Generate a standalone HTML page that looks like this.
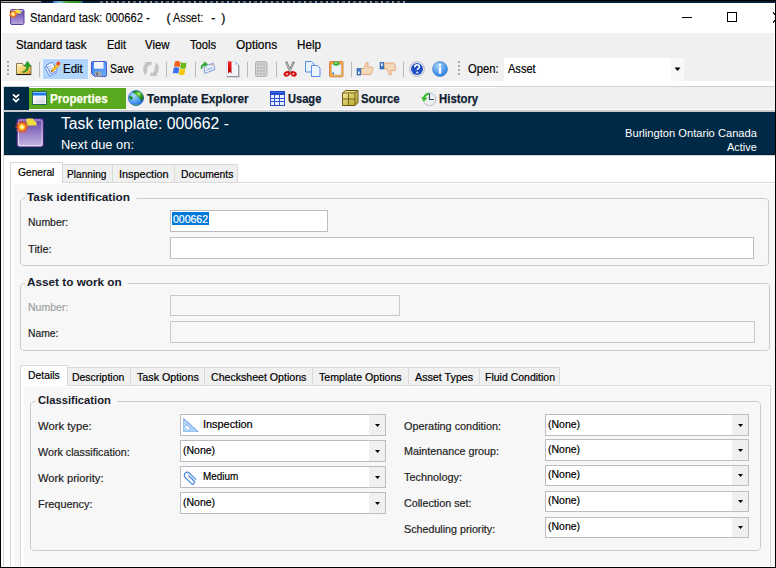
<!DOCTYPE html>
<html><head><meta charset="utf-8"><style>
html,body{margin:0;padding:0;width:776px;height:568px;overflow:hidden;background:#fff}
body{position:relative;font-family:"Liberation Sans",sans-serif;}
.t{position:absolute;white-space:nowrap;line-height:20px;-webkit-text-stroke-width:0.2px}
svg{position:absolute;overflow:visible}
</style></head><body>
<div style="position:absolute;left:0px;top:0px;width:776px;height:3px;background:#0a1a28"></div>
<div style="position:absolute;left:0px;top:0px;width:776px;height:568px;background:#fff"></div>
<div style="position:absolute;left:0px;top:0px;width:776px;height:1px;background:#000"></div>
<div style="position:absolute;left:0px;top:1px;width:41px;height:1px;background:#a8a8a8"></div>
<div style="position:absolute;left:0px;top:2px;width:41px;height:1px;background:#303030"></div>
<div style="position:absolute;left:41px;top:1px;width:735px;height:2px;background:#06203a"></div>
<div style="position:absolute;left:53px;top:1px;width:30px;height:2px;background:linear-gradient(90deg,#3070d0,#80b8f0 20%,#50a030 45%,#209020 90%,#2050c0)"></div>
<div style="position:absolute;left:100px;top:1px;width:305px;height:2px;background:repeating-linear-gradient(90deg,#5a6a78 0 3px,#06203a 3px 6px,#8a96a0 6px 8px,#06203a 8px 11px)"></div>
<svg style="left:10px;top:9px" width="16" height="17" viewBox="0 0 16 17"><defs><linearGradient id="tig" x1="0" y1="0" x2="0" y2="1"><stop offset="0" stop-color="#5a3aa6"/><stop offset="1" stop-color="#bba8de"/></linearGradient>
<radialGradient id="sun2"><stop offset="0" stop-color="#ffffff"/><stop offset="0.4" stop-color="#fff07a"/><stop offset="1" stop-color="#f87818"/></radialGradient></defs>
<rect x="0.5" y="0.5" width="13.5" height="15" rx="1.5" fill="url(#tig)" stroke="#5b42a2"/>
<rect x="1.5" y="1.2" width="11.5" height="1.2" fill="#fff" opacity="0.8"/>
<path d="M5 0.5h3.8l0.8 1.6c1 0 1.6 0.6 1.6 1.4v1h-6.2z" fill="#f0e040"/>
<g transform="translate(3.1,5.1)"><path d="M0.00 -4.60 L0.80 -2.47 L2.70 -3.72 L2.10 -1.53 L4.37 -1.42 L2.60 -0.00 L4.37 1.42 L2.10 1.53 L2.70 3.72 L0.80 2.47 L0.00 4.60 L-0.80 2.47 L-2.70 3.72 L-2.10 1.53 L-4.37 1.42 L-2.60 0.00 L-4.37 -1.42 L-2.10 -1.53 L-2.70 -3.72 L-0.80 -2.47z" fill="#f26a10"/><circle r="2.7" fill="url(#sun2)"/></g></svg>
<div class="t" style="left:30.20px;top:8.32px;font-size:12.35px;color:#000;transform:scaleX(0.9095);transform-origin:0 0;-webkit-text-stroke-width:0.1px">Standard task: 000662 -</div>
<div class="t" style="left:166.40px;top:8.32px;font-size:12.35px;color:#000;">(</div>
<div class="t" style="left:173.30px;top:8.32px;font-size:12.35px;color:#000;transform:scaleX(0.8799);transform-origin:0 0;-webkit-text-stroke-width:0.1px">Asset:</div>
<div class="t" style="left:211.20px;top:8.32px;font-size:12.35px;color:#000;">-</div>
<div class="t" style="left:221.20px;top:8.32px;font-size:12.35px;color:#000;">)</div>
<div style="position:absolute;left:682px;top:17px;width:10px;height:1px;background:#000"></div>
<div style="position:absolute;left:727px;top:12px;width:10px;height:10px;border:1px solid #000;box-sizing:border-box"></div>
<svg style="left:772px;top:11px" width="4" height="13" viewBox="0 0 4 13"><path d="M1 1.5l3 3M1 11.5l3-3" stroke="#000" stroke-width="1.2"/></svg>
<div style="position:absolute;left:2px;top:33px;width:772px;height:48px;background:#f0f0f0"></div>
<div class="t" style="left:16.20px;top:34.67px;font-size:12.5px;color:#000;transform:scaleX(0.9138);transform-origin:0 0;">Standard task</div>
<div class="t" style="left:106.50px;top:34.67px;font-size:12.5px;color:#000;transform:scaleX(0.8822);transform-origin:0 0;">Edit</div>
<div class="t" style="left:145.40px;top:34.67px;font-size:12.5px;color:#000;transform:scaleX(0.9108);transform-origin:0 0;">View</div>
<div class="t" style="left:189.70px;top:34.67px;font-size:12.5px;color:#000;transform:scaleX(0.8980);transform-origin:0 0;">Tools</div>
<div class="t" style="left:235.50px;top:34.67px;font-size:12.5px;color:#000;transform:scaleX(0.9541);transform-origin:0 0;">Options</div>
<div class="t" style="left:296.70px;top:34.67px;font-size:12.5px;color:#000;transform:scaleX(0.9334);transform-origin:0 0;">Help</div>
<div style="position:absolute;left:7px;top:61px;width:2px;height:2px;background:#a8a8a8"></div>
<div style="position:absolute;left:7px;top:65px;width:2px;height:2px;background:#a8a8a8"></div>
<div style="position:absolute;left:7px;top:69px;width:2px;height:2px;background:#a8a8a8"></div>
<div style="position:absolute;left:7px;top:73px;width:2px;height:2px;background:#a8a8a8"></div>
<div style="position:absolute;left:458px;top:61px;width:2px;height:2px;background:#a8a8a8"></div>
<div style="position:absolute;left:458px;top:65px;width:2px;height:2px;background:#a8a8a8"></div>
<div style="position:absolute;left:458px;top:69px;width:2px;height:2px;background:#a8a8a8"></div>
<div style="position:absolute;left:458px;top:73px;width:2px;height:2px;background:#a8a8a8"></div>
<div style="position:absolute;left:39px;top:62px;width:1px;height:15px;background:#b8b8b8"></div>
<div style="position:absolute;left:166px;top:62px;width:1px;height:15px;background:#b8b8b8"></div>
<div style="position:absolute;left:195px;top:62px;width:1px;height:15px;background:#b8b8b8"></div>
<div style="position:absolute;left:247px;top:62px;width:1px;height:15px;background:#b8b8b8"></div>
<div style="position:absolute;left:276px;top:62px;width:1px;height:15px;background:#b8b8b8"></div>
<div style="position:absolute;left:351px;top:62px;width:1px;height:15px;background:#b8b8b8"></div>
<div style="position:absolute;left:403px;top:62px;width:1px;height:15px;background:#b8b8b8"></div>
<div style="position:absolute;left:42px;top:58px;width:47px;height:22px;background:#b1d5fb;border:1px solid #f4f9ff;box-sizing:border-box"></div>
<svg style="left:16px;top:60px" width="16" height="16" viewBox="0 0 16 16"><defs><linearGradient id="fg" x1="0" y1="0" x2="1" y2="1"><stop offset="0" stop-color="#fcf0b8"/><stop offset="0.55" stop-color="#f2cc68"/><stop offset="1" stop-color="#e39a2a"/></linearGradient></defs>
<path d="M0.5 3.5h6l1 2h7.5v9h-14.5z" fill="url(#fg)" stroke="#7a6a4a" stroke-width="0.9"/>
<rect x="1.2" y="4.2" width="5" height="1.6" fill="#fff4c8"/>
<path d="M0.5 14.5h14.5" stroke="#1a1a1a" stroke-width="1.1"/>
<path d="M6.5 11.8c2.5-0.6 4.2-2.5 4.4-5.6h-2.6l3.2-5 3.4 5h-2.2c-0.2 4-2.6 6.2-6.2 6.2z" fill="#22a822" stroke="#0e6e10" stroke-width="0.5"/></svg>
<svg style="left:44px;top:61px" width="16" height="16" viewBox="0 0 16 16"><path d="M0.8 6.5l6.5-3.2 5.2 8.6-6.8 3.4z" fill="#dfe8fb" stroke="#6a8ee6" stroke-width="0.9"/>
<path d="M2.2 4.2l6.2-3 5 8.5-6.5 3.2z" fill="#f6f9ff" stroke="#5a7ee0" stroke-width="0.9"/>
<path d="M3.6 6.4l3.6-1.7M4.6 8.2l3.6-1.7M5.6 10l3.6-1.7" stroke="#90b0ee" stroke-width="0.9"/>
<path d="M7.2 10.8l0.8-2.4 5.6-6.2 1.9 1.7-5.6 6.2z" fill="#f8c418" stroke="#b87a10" stroke-width="0.5"/>
<circle cx="14.3" cy="2.4" r="1.9" fill="#ec4a34"/>
<path d="M7.2 10.8l0.5-1.5 1 0.9z" fill="#222"/></svg>
<svg style="left:91px;top:61px" width="16" height="16" viewBox="0 0 16 16"><defs><linearGradient id="svg1" x1="0" y1="0" x2="1" y2="1"><stop offset="0" stop-color="#3a7ee8"/><stop offset="1" stop-color="#6ab0ff"/></linearGradient></defs>
<path d="M0.5 1.5a1 1 0 0 1 1-1h13a1 1 0 0 1 1 1v13a1 1 0 0 1-1 1h-11l-3-3z" fill="url(#svg1)" stroke="#5656c4"/>
<path d="M3 1h9.5v6.5h-9.5z" fill="#f4f6fe"/><path d="M3 7.5h9.5" stroke="#c8d4f4" stroke-width="0.8"/>
<rect x="4" y="10.5" width="6.5" height="5" fill="#a6a6ae"/><rect x="5.5" y="11.5" width="1.3" height="3" fill="#505058"/></svg>
<svg style="left:143px;top:61px" width="16" height="16" viewBox="0 0 16 16"><path d="M1.5 1h7.5l-1.2 4-1.4-1.2c-1.8 1.6-2.6 3.8-2.2 6.4l-1.6 4.3c-1.8-2-2.6-4.5-2.3-7.3 0.3-2.2 1.2-3.8 2.6-4.9z" fill="#c2c2c2"/><path d="M1.5 1h7.5l-1.2 4-1.4-1.2c-1.8 1.6-2.6 3.8-2.2 6.4l-1.6 4.3c-1.8-2-2.6-4.5-2.3-7.3 0.3-2.2 1.2-3.8 2.6-4.9z" fill="#c2c2c2" transform="rotate(180 8 8)"/></svg>
<svg style="left:172px;top:60px" width="16" height="16" viewBox="0 0 16 16"><path d="M3 1.5c2-0.8 3.5-0.6 5.5 0.2l-1 5.6c-2-0.8-3.5-1-5.6-0.2z" fill="#f06018"/>
<path d="M9 2.2c2 0.8 3.5 1 5.6 0.2l-1 5.8c-2 0.8-3.5 0.6-5.6-0.2z" fill="#68b818"/>
<path d="M1.8 7.8c2-0.8 3.5-0.6 5.5 0.2l-1 5.6c-2-0.8-3.5-1-5.6-0.2z" fill="#3a6ef0"/>
<path d="M7.8 8.6c2 0.8 3.5 1 5.6 0.2l-1 5.8c-2 0.8-3.5 0.6-5.6-0.2z" fill="#f8c810"/></svg>
<svg style="left:200px;top:61px" width="16" height="16" viewBox="0 0 16 16"><path d="M4 5.1L13.5 2.3 14.9 8.6 4.7 12.5z" fill="#eaf1fd" stroke="#7894d6" stroke-width="0.9"/>
<path d="M4.3 5.3L9.6 8.2 13.4 2.6" fill="none" stroke="#b4c8ee" stroke-width="0.8"/>
<path d="M6 9.5l6.5-2.4" stroke="#a8c0ec" stroke-width="1.2"/>
<rect x="11" y="3.2" width="1.8" height="1" fill="#e8a040"/>
<path d="M1.2 7.8c-0.8-2.6 0.8-5 3.4-5.6l-0.4-1.6 3.4 2.6-3 2.4-0.3-1.5c-1.6 0.4-2.4 2-2 3.4z" fill="#2cb02c" stroke="#1a8a1a" stroke-width="0.4"/></svg>
<svg style="left:224px;top:61px" width="16" height="17" viewBox="0 0 16 17"><defs><linearGradient id="rib" x1="0" y1="0" x2="0" y2="1"><stop offset="0" stop-color="#ff2020"/><stop offset="1" stop-color="#b00000"/></linearGradient></defs>
<path d="M2.5 0.5h9l3 3v12h-12z" fill="#f0f3f8" stroke="#d0d4e0" stroke-width="0.8"/>
<path d="M11.5 0.5v3h3z" fill="#a0c4ec"/>
<path d="M14.8 4v11.8h-12" stroke="#606060" stroke-width="1.1" fill="none" opacity="0.7"/>
<path d="M4 0.5h3.5v12l-1.75-1.8-1.75 1.8z" fill="url(#rib)"/></svg>
<svg style="left:254px;top:61px" width="16" height="16" viewBox="0 0 16 16"><rect x="1.5" y="0.5" width="11.5" height="15" rx="2" fill="#d4d4d4" stroke="#b0b0b0"/><rect x="3" y="2" width="8.5" height="2.5" fill="#c0c0c0"/><rect x="3.2" y="6" width="1.6" height="1.6" fill="#a8a8a8"/><rect x="6.2" y="6" width="1.6" height="1.6" fill="#a8a8a8"/><rect x="9.2" y="6" width="1.6" height="1.6" fill="#a8a8a8"/><rect x="3.2" y="9" width="1.6" height="1.6" fill="#a8a8a8"/><rect x="6.2" y="9" width="1.6" height="1.6" fill="#a8a8a8"/><rect x="9.2" y="9" width="1.6" height="1.6" fill="#a8a8a8"/><rect x="3.2" y="12" width="1.6" height="1.6" fill="#a8a8a8"/><rect x="6.2" y="12" width="1.6" height="1.6" fill="#a8a8a8"/><rect x="9.2" y="12" width="1.6" height="1.6" fill="#a8a8a8"/></svg>
<svg style="left:282px;top:61px" width="16" height="16" viewBox="0 0 16 16"><path d="M4.5 1.5l4 9.5M11.5 1.5l-4.5 9.5" stroke="#7a7a7a" stroke-width="2.2" stroke-linecap="round"/>
<path d="M4.5 1.8l3.8 8.8M11.5 1.8l-4.2 8.8" stroke="#d8d8d8" stroke-width="0.7"/>
<ellipse cx="4.8" cy="12.8" rx="3.3" ry="2.6" transform="rotate(-25 4.8 12.8)" fill="#d81010"/>
<ellipse cx="11.6" cy="12.8" rx="3.3" ry="2.6" transform="rotate(25 11.6 12.8)" fill="#d81010"/>
<circle cx="5" cy="13" r="1" fill="#f0c0c0"/><circle cx="11.4" cy="13" r="1" fill="#f0c0c0"/></svg>
<svg style="left:305px;top:61px" width="16" height="16" viewBox="0 0 16 16"><path d="M0.5 0.5h6l2.5 2.5v8h-8.5z" fill="#e8f0fc" stroke="#5a8ee0"/>
<path d="M6.5 4.5h6l2.5 2.5v8.5h-8.5z" fill="#eef4fc" stroke="#5a8ee0"/></svg>
<svg style="left:329px;top:61px" width="16" height="16" viewBox="0 0 16 16"><defs><linearGradient id="pst" x1="0" y1="0" x2="1" y2="1"><stop offset="0" stop-color="#f89a20"/><stop offset="1" stop-color="#f8c040"/></linearGradient></defs>
<rect x="0.5" y="0.5" width="13.5" height="15.3" rx="1" fill="url(#pst)" stroke="#d07858" stroke-width="0.9"/>
<path d="M2.6 3.2h9.4v10.6h-7.2l-2.2-2.2z" fill="#eef4ff" stroke="#a8bce0" stroke-width="0.5"/>
<path d="M2.6 11.4l2.4 2.4v-2.4z" fill="#2a6ae0"/>
<ellipse cx="7.3" cy="2.6" rx="3.2" ry="2.2" fill="#30b030"/><ellipse cx="7" cy="2" rx="1.8" ry="0.9" fill="#90e070"/></svg>
<svg style="left:356px;top:61px" width="18" height="16" viewBox="0 0 18 16"><path d="M5 7.5h3l2-5c0-1.5 2.5-1.5 2.2 0.5l-0.6 3h4c1.2 0 1.5 1.5 0.6 2 0.8 0.5 0.6 1.8-0.2 2 0.6 0.6 0.3 1.7-0.5 1.8 0.3 0.8-0.2 1.7-1 1.7h-7.5l-2-0.8z" fill="#f4d8bc" stroke="#e0a070" stroke-width="0.9"/>
<rect x="1" y="7.5" width="3.8" height="6.5" fill="#3a7ad0" stroke="#2a5a9a" stroke-width="0.6"/><rect x="2" y="10.5" width="1.6" height="2.5" fill="#fff"/></svg>
<svg style="left:379px;top:61px" width="18" height="16" viewBox="0 0 18 16"><path d="M5 8h3l2 5c0 1.5 2.5 1.5 2.2-0.5l-0.6-3h4c1.2 0 1.5-1.5 0.6-2 0.8-0.5 0.6-1.8-0.2-2 0.6-0.6 0.3-1.7-0.5-1.8 0.3-0.8-0.2-1.7-1-1.7h-7.5l-2 0.8z" fill="#f4d8bc" stroke="#e0a070" stroke-width="0.9"/>
<rect x="1" y="1.5" width="3.8" height="6.5" fill="#3a7ad0" stroke="#2a5a9a" stroke-width="0.6"/><rect x="2" y="2.5" width="1.6" height="2.5" fill="#fff"/></svg>
<svg style="left:409px;top:61px" width="16" height="16" viewBox="0 0 16 16"><circle cx="8" cy="8" r="7.3" fill="#fff" stroke="#9aa0b0" stroke-width="0.8"/>
<circle cx="8" cy="8" r="6" fill="#2050c0"/>
<path d="M5.8 6.2c0-1.5 1-2.4 2.3-2.4 1.4 0 2.3 0.9 2.3 2 0 1.6-2 1.8-2 3.3" fill="none" stroke="#fff" stroke-width="1.6"/>
<circle cx="8.3" cy="11.6" r="1" fill="#fff"/></svg>
<svg style="left:432px;top:61px" width="16" height="16" viewBox="0 0 16 16"><defs><radialGradient id="ig" cx="0.4" cy="0.3" r="0.8"><stop offset="0" stop-color="#a8d8ff"/><stop offset="1" stop-color="#1a70d8"/></radialGradient></defs>
<circle cx="8" cy="8" r="7.5" fill="url(#ig)" stroke="#3a80d0" stroke-width="0.6"/>
<circle cx="8" cy="4" r="1.2" fill="#fff"/><rect x="6.9" y="6.2" width="2.2" height="6.5" fill="#fff"/></svg>
<div class="t" style="left:63.30px;top:58.87px;font-size:12.5px;color:#000;transform:scaleX(0.9147);transform-origin:0 0;">Edit</div>
<div class="t" style="left:110.00px;top:58.87px;font-size:12.5px;color:#000;transform:scaleX(0.8319);transform-origin:0 0;">Save</div>
<div class="t" style="left:467.70px;top:58.87px;font-size:12.5px;color:#000;transform:scaleX(0.8957);transform-origin:0 0;">Open:</div>
<div style="position:absolute;left:504px;top:58px;width:180px;height:23px;background:#fff"></div>
<div style="position:absolute;left:671px;top:58px;width:13px;height:23px;background:#f8f8f8"></div>
<svg style="left:674px;top:67px" width="7" height="5" viewBox="0 0 7 5"><path d="M0.5 0.5h6l-3 3.5z" fill="#000"/></svg>
<div class="t" style="left:508.20px;top:59.07px;font-size:12.5px;color:#000;transform:scaleX(0.8828);transform-origin:0 0;">Asset</div>
<div style="position:absolute;left:2px;top:81px;width:772px;height:5px;background:#fff"></div>
<div style="position:absolute;left:4px;top:86px;width:771px;height:1px;background:#cdd0d4"></div>
<div style="position:absolute;left:4px;top:87px;width:771px;height:22px;background:#f0f0f0"></div>
<div style="position:absolute;left:4px;top:109px;width:771px;height:1px;background:#fff"></div>
<div style="position:absolute;left:29px;top:87px;width:468px;height:1px;background:#fff"></div>
<div style="position:absolute;left:4px;top:110px;width:771px;height:2px;background:#c8ccd0"></div>
<div style="position:absolute;left:4px;top:87px;width:25px;height:23px;background:#002946"></div>
<div style="position:absolute;left:29px;top:88px;width:97px;height:21px;background:#59a91e"></div>
<svg style="left:11px;top:92px" width="10" height="12" viewBox="0 0 10 12"><path d="M2 2.3l3 2.9 3-2.9M2 6.6l3 2.9 3-2.9" stroke="#fff" stroke-width="1.7" fill="none"/></svg>
<svg style="left:32px;top:91px" width="16" height="16" viewBox="0 0 16 16"><defs><linearGradient id="pg" x1="0" y1="0" x2="1" y2="1"><stop offset="0" stop-color="#fafafa"/><stop offset="1" stop-color="#d0d0e0"/></linearGradient></defs>
<rect x="0.5" y="0.5" width="14" height="13" fill="#fff" stroke="#2a6a50"/>
<rect x="1" y="1" width="13" height="3.5" fill="#1a78f0"/><rect x="1" y="1" width="13" height="1" fill="#8ac0ff"/>
<rect x="2" y="5" width="11" height="7.5" fill="url(#pg)"/></svg>
<svg style="left:128px;top:90px" width="17" height="17" viewBox="0 0 17 17"><defs><radialGradient id="gg" cx="0.35" cy="0.35" r="0.75"><stop offset="0" stop-color="#a8dcff"/><stop offset="0.6" stop-color="#4a98f0"/><stop offset="1" stop-color="#1a5ad8"/></radialGradient>
<radialGradient id="gl" cx="0.55" cy="0.3" r="0.6"><stop offset="0" stop-color="#b8f080"/><stop offset="0.5" stop-color="#30a020"/><stop offset="1" stop-color="#107010"/></radialGradient></defs>
<circle cx="8" cy="8" r="7.6" fill="url(#gg)" stroke="#3a68d8" stroke-width="0.8"/>
<path d="M4.5 1.8c2.5-1.4 6-1.3 8.5 0.8 1.8 1.6 2.6 3.8 2.5 6-0.6 0.8-1.4 2-2.4 2.8l-0.4-2.2c-0.8-0.4-1.8-1-2-2.4-1.2 0.1-2-0.5-2.6-1.4 0.4-0.9-0.2-1.6-1.2-1.9-1 0.2-1.8-0.2-2.4-1.7z" fill="url(#gl)"/>
<path d="M0.8 6.5c1.2-0.6 2.6-0.4 3.6 0.6 0.6 1 0 2.1-0.8 2.8-1.2-0.2-2.3-1.5-2.8-3.4z" fill="#188a18"/>
<path d="M5 14.6c2 0.6 4 0.6 6 0" stroke="#40b040" stroke-width="0.9" fill="none"/></svg>
<svg style="left:270px;top:91px" width="16" height="16" viewBox="0 0 16 16"><rect x="0.5" y="0.5" width="14" height="14" fill="#e4f0ff" stroke="#3450c8"/><rect x="0" y="0" width="15" height="3.5" fill="#1840c8"/><rect x="1" y="1" width="13" height="1" fill="#3a78f0"/><path d="M4.5 0v15" stroke="#3450c8"/><path d="M9.5 0v15" stroke="#3450c8"/><path d="M0 3.5h15" stroke="#3450c8"/><path d="M0 7.5h15" stroke="#3450c8"/><path d="M0 10.5h15" stroke="#3450c8"/></svg>
<svg style="left:342px;top:90px" width="17" height="17" viewBox="0 0 17 17"><defs><linearGradient id="sg" x1="0" y1="0" x2="1" y2="1"><stop offset="0" stop-color="#f8f0a0"/><stop offset="1" stop-color="#b8a020"/></linearGradient></defs>
<path d="M0.5 3l3-2.5h12.5v12l-3 3h-12.5z" fill="url(#sg)" stroke="#6a5a18"/>
<path d="M0.5 3h12.5v12.5M13 3l3-2.5M6.5 3.5v12M0.8 9h12" stroke="#6a5a18" fill="none" stroke-width="0.9"/></svg>
<svg style="left:420px;top:91px" width="16" height="16" viewBox="0 0 16 16"><circle cx="9.5" cy="8.3" r="6.3" fill="#eef0f2" stroke="#b8bcc4"/>
<path d="M9.5 2.5v6h4.5" stroke="#3a4a60" stroke-width="1.1" fill="none"/>
<path d="M9 1.8c-3 0-5 1.8-6 4.5l-2 -0.3 2.8 4.8 3.8-3.8-2.1-0.3c0.6-1.5 1.8-2.6 3.5-2.9z" fill="#38c030"/></svg>
<div class="t" style="left:50.30px;top:89.42px;font-size:12.94px;color:#fffff0;font-weight:bold;-webkit-text-stroke-width:0;transform:scaleX(0.9015);transform-origin:0 0;-webkit-text-stroke-width:0.25px">Properties</div>
<div class="t" style="left:147.00px;top:89.42px;font-size:12.94px;color:#0e1d33;font-weight:bold;-webkit-text-stroke-width:0;transform:scaleX(0.9076);transform-origin:0 0;-webkit-text-stroke-width:0.25px">Template Explorer</div>
<div class="t" style="left:288.30px;top:89.42px;font-size:12.94px;color:#0e1d33;font-weight:bold;-webkit-text-stroke-width:0;transform:scaleX(0.8575);transform-origin:0 0;-webkit-text-stroke-width:0.25px">Usage</div>
<div class="t" style="left:361.20px;top:89.42px;font-size:12.94px;color:#0e1d33;font-weight:bold;-webkit-text-stroke-width:0;transform:scaleX(0.8822);transform-origin:0 0;-webkit-text-stroke-width:0.25px">Source</div>
<div class="t" style="left:439.30px;top:89.42px;font-size:12.94px;color:#0e1d33;font-weight:bold;-webkit-text-stroke-width:0;transform:scaleX(0.8794);transform-origin:0 0;-webkit-text-stroke-width:0.25px">History</div>
<div style="position:absolute;left:4px;top:112px;width:771px;height:42px;background:#002946"></div>
<div style="position:absolute;left:4px;top:154px;width:771px;height:1px;background:#001a30"></div>
<div style="position:absolute;left:4px;top:155px;width:771px;height:1px;background:#d4d8dc"></div>
<svg style="left:13px;top:117px" width="34" height="34" viewBox="0 0 34 34"><defs><linearGradient id="hig" x1="0" y1="0" x2="0" y2="1"><stop offset="0" stop-color="#6242a8"/><stop offset="1" stop-color="#c8b8e6"/></linearGradient>
<radialGradient id="sun1"><stop offset="0" stop-color="#ffffff"/><stop offset="0.35" stop-color="#fff27a"/><stop offset="0.7" stop-color="#ffa020"/><stop offset="1" stop-color="#f05010"/></radialGradient></defs>
<rect x="4" y="1.5" width="26.5" height="28.5" rx="2.5" fill="url(#hig)" stroke="#3c2278" stroke-width="1.2"/>
<rect x="5.5" y="3" width="23.5" height="25.5" rx="1.5" fill="none" stroke="#fff" stroke-opacity="0.6"/>
<path d="M13.5 1.5h6.5l1.2 2.5c1.5 0 2.3 0.8 2.3 2v2.5h-10z" fill="#f0dc3c"/>
<g transform="translate(9,10)"><path d="M0.00 -7.60 L1.04 -3.86 L3.80 -6.58 L2.83 -2.83 L6.58 -3.80 L3.86 -1.04 L7.60 -0.00 L3.86 1.04 L6.58 3.80 L2.83 2.83 L3.80 6.58 L1.04 3.86 L0.00 7.60 L-1.04 3.86 L-3.80 6.58 L-2.83 2.83 L-6.58 3.80 L-3.86 1.04 L-7.60 0.00 L-3.86 -1.04 L-6.58 -3.80 L-2.83 -2.83 L-3.80 -6.58 L-1.04 -3.86z" fill="#f25a12"/><circle r="4.3" fill="url(#sun1)"/></g></svg>
<div class="t" style="left:61.00px;top:113.58px;font-size:15.63px;color:#fff;transform:scaleX(1.0071);transform-origin:0 0;-webkit-text-stroke-width:0">Task template: 000662 -</div>
<div class="t" style="left:61.00px;top:135.47px;font-size:12.79px;color:#fff;transform:scaleX(1.0066);transform-origin:0 0;-webkit-text-stroke-width:0">Next due on:</div>
<div class="t" style="left:625.30px;top:122.87px;font-size:11.63px;color:#fff;transform:scaleX(0.9584);transform-origin:0 0;-webkit-text-stroke-width:0">Burlington Ontario Canada</div>
<div class="t" style="left:727.40px;top:136.97px;font-size:11.63px;color:#fff;transform:scaleX(0.9442);transform-origin:0 0;-webkit-text-stroke-width:0">Active</div>
<div style="position:absolute;left:10px;top:182px;width:766px;height:386px;background:#fff;border-left:1px solid #d9d9d9;border-top:1px solid #d9d9d9;box-sizing:border-box"></div>
<div style="position:absolute;left:14px;top:184px;width:761px;height:383px;background:#f7f7f7"></div>
<div style="position:absolute;left:62px;top:164px;width:51px;height:18px;background:#f0f0f0;border:1px solid #d9d9d9;border-bottom:none;box-sizing:border-box"></div>
<div class="t" style="left:66.80px;top:164.02px;font-size:11.19px;color:#000;transform:scaleX(0.9047);transform-origin:0 0;">Planning</div>
<div style="position:absolute;left:112px;top:164px;width:63px;height:18px;background:#f0f0f0;border:1px solid #d9d9d9;border-bottom:none;box-sizing:border-box"></div>
<div class="t" style="left:118.50px;top:164.02px;font-size:11.19px;color:#000;transform:scaleX(0.9742);transform-origin:0 0;">Inspection</div>
<div style="position:absolute;left:174px;top:164px;width:64px;height:18px;background:#f0f0f0;border:1px solid #d9d9d9;border-bottom:none;box-sizing:border-box"></div>
<div class="t" style="left:180.80px;top:164.02px;font-size:11.19px;color:#000;transform:scaleX(0.9258);transform-origin:0 0;">Documents</div>
<div style="position:absolute;left:10px;top:162px;width:53px;height:21px;background:#fff;border:1px solid #d9d9d9;border-bottom:none;box-sizing:border-box"></div>
<div class="t" style="left:17.80px;top:162.02px;font-size:11.19px;color:#000;transform:scaleX(0.9143);transform-origin:0 0;">General</div>
<svg style="left:20px;top:198px" width="749" height="68" viewBox="0 0 749 68"><path d="M116.5 0.5H746L748.5 3V65L746 67.5H3L0.5 65V3L3 0.5H5.199999999999999" fill="none" stroke="#c6cbd3" stroke-width="1"/></svg>
<div class="t" style="left:27.20px;top:186.97px;font-size:11.34px;color:#16202c;font-weight:bold;-webkit-text-stroke-width:0;transform:scaleX(1.0444);transform-origin:0 0;">Task identification</div>
<div class="t" style="left:28.40px;top:211.82px;font-size:11.48px;color:#1e1e1e;transform:scaleX(0.9131);transform-origin:0 0;">Number:</div>
<div class="t" style="left:28.40px;top:238.62px;font-size:11.48px;color:#1e1e1e;transform:scaleX(0.9692);transform-origin:0 0;">Title:</div>
<div style="position:absolute;left:170px;top:210px;width:158px;height:22px;background:#fff;border:1px solid #bcbcc2;box-sizing:border-box"></div>
<div style="position:absolute;left:172px;top:212px;width:37px;height:13px;background:#0078d7"></div>
<div class="t" style="left:172.50px;top:209.32px;font-size:11.19px;color:#fff;transform:scaleX(0.9373);transform-origin:0 0;">000662</div>
<div style="position:absolute;left:170px;top:237px;width:584px;height:22px;background:#fff;border:1px solid #bcbcc2;box-sizing:border-box"></div>
<svg style="left:20px;top:283px" width="750" height="68" viewBox="0 0 750 68"><path d="M107.5 0.5H747L749.5 3V65L747 67.5H3L0.5 65V3L3 0.5H5.199999999999999" fill="none" stroke="#c6cbd3" stroke-width="1"/></svg>
<div class="t" style="left:27.20px;top:271.97px;font-size:11.34px;color:#16202c;font-weight:bold;-webkit-text-stroke-width:0;transform:scaleX(1.0376);transform-origin:0 0;">Asset to work on</div>
<div class="t" style="left:28.40px;top:296.82px;font-size:11.48px;color:#a0a0a0;transform:scaleX(0.9176);transform-origin:0 0;">Number:</div>
<div class="t" style="left:28.40px;top:322.82px;font-size:11.48px;color:#1e1e1e;transform:scaleX(0.9021);transform-origin:0 0;">Name:</div>
<div style="position:absolute;left:170px;top:295px;width:230px;height:21px;background:#f7f7f7;border:1px solid #c8c8cc;box-sizing:border-box"></div>
<div style="position:absolute;left:170px;top:321px;width:585px;height:22px;background:#f7f7f7;border:1px solid #c8c8cc;box-sizing:border-box"></div>
<div style="position:absolute;left:20px;top:385px;width:751px;height:182px;background:#fff;border-left:1px solid #d9d9d9;border-top:1px solid #d9d9d9;border-right:1px solid #d9d9d9;box-sizing:border-box"></div>
<div style="position:absolute;left:24px;top:387px;width:745px;height:179px;background:#f7f7f7"></div>
<div style="position:absolute;left:67px;top:367px;width:64px;height:18px;background:#f0f0f0;border:1px solid #d9d9d9;border-bottom:none;box-sizing:border-box"></div>
<div class="t" style="left:71.60px;top:367.12px;font-size:11.19px;color:#000;transform:scaleX(0.9344);transform-origin:0 0;">Description</div>
<div style="position:absolute;left:130px;top:367px;width:75px;height:18px;background:#f0f0f0;border:1px solid #d9d9d9;border-bottom:none;box-sizing:border-box"></div>
<div class="t" style="left:136.60px;top:367.12px;font-size:11.19px;color:#000;transform:scaleX(0.9570);transform-origin:0 0;">Task Options</div>
<div style="position:absolute;left:204px;top:367px;width:109px;height:18px;background:#f0f0f0;border:1px solid #d9d9d9;border-bottom:none;box-sizing:border-box"></div>
<div class="t" style="left:210.80px;top:367.12px;font-size:11.19px;color:#000;transform:scaleX(0.9467);transform-origin:0 0;">Checksheet Options</div>
<div style="position:absolute;left:312px;top:367px;width:97px;height:18px;background:#f0f0f0;border:1px solid #d9d9d9;border-bottom:none;box-sizing:border-box"></div>
<div class="t" style="left:319.40px;top:367.12px;font-size:11.19px;color:#000;transform:scaleX(0.9497);transform-origin:0 0;">Template Options</div>
<div style="position:absolute;left:408px;top:367px;width:72px;height:18px;background:#f0f0f0;border:1px solid #d9d9d9;border-bottom:none;box-sizing:border-box"></div>
<div class="t" style="left:414.90px;top:367.12px;font-size:11.19px;color:#000;transform:scaleX(0.9580);transform-origin:0 0;">Asset Types</div>
<div style="position:absolute;left:479px;top:367px;width:81px;height:18px;background:#f0f0f0;border:1px solid #d9d9d9;border-bottom:none;box-sizing:border-box"></div>
<div class="t" style="left:485.20px;top:367.12px;font-size:11.19px;color:#000;transform:scaleX(0.9379);transform-origin:0 0;">Fluid Condition</div>
<div style="position:absolute;left:20px;top:365px;width:48px;height:21px;background:#fff;border:1px solid #d9d9d9;border-bottom:none;box-sizing:border-box"></div>
<div class="t" style="left:27.80px;top:364.92px;font-size:11.19px;color:#000;transform:scaleX(0.9296);transform-origin:0 0;">Details</div>
<svg style="left:30px;top:401px" width="731" height="150" viewBox="0 0 731 150"><path d="M87.5 0.5H728L730.5 3V147L728 149.5H3L0.5 147V3L3 0.5H5.600000000000001" fill="none" stroke="#c6cbd3" stroke-width="1"/></svg>
<div class="t" style="left:37.60px;top:389.87px;font-size:11.34px;color:#16202c;font-weight:bold;-webkit-text-stroke-width:0;transform:scaleX(0.9887);transform-origin:0 0;">Classification</div>
<div class="t" style="left:38.40px;top:416.02px;font-size:11.48px;color:#1e1e1e;transform:scaleX(0.9807);transform-origin:0 0;">Work type:</div>
<div class="t" style="left:38.40px;top:441.82px;font-size:11.48px;color:#1e1e1e;transform:scaleX(0.9364);transform-origin:0 0;">Work classification:</div>
<div class="t" style="left:38.40px;top:467.62px;font-size:11.48px;color:#1e1e1e;transform:scaleX(0.9733);transform-origin:0 0;">Work priority:</div>
<div class="t" style="left:38.40px;top:493.52px;font-size:11.48px;color:#1e1e1e;transform:scaleX(0.9508);transform-origin:0 0;">Frequency:</div>
<div class="t" style="left:403.50px;top:415.82px;font-size:11.48px;color:#1e1e1e;transform:scaleX(0.9460);transform-origin:0 0;">Operating condition:</div>
<div class="t" style="left:403.50px;top:440.92px;font-size:11.48px;color:#1e1e1e;transform:scaleX(0.9372);transform-origin:0 0;">Maintenance group:</div>
<div class="t" style="left:403.50px;top:466.82px;font-size:11.48px;color:#1e1e1e;transform:scaleX(0.9466);transform-origin:0 0;">Technology:</div>
<div class="t" style="left:403.50px;top:492.62px;font-size:11.48px;color:#1e1e1e;transform:scaleX(0.9361);transform-origin:0 0;">Collection set:</div>
<div class="t" style="left:403.50px;top:518.62px;font-size:11.48px;color:#1e1e1e;transform:scaleX(0.9342);transform-origin:0 0;">Scheduling priority:</div>
<div style="position:absolute;left:180px;top:414px;width:206px;height:22px;background:#fff;border:1px solid #bcbcc2;box-sizing:border-box"></div>
<div style="position:absolute;left:369px;top:415px;width:16px;height:20px;background:#f0f0f0"></div>
<svg style="left:375px;top:424px" width="5" height="3" viewBox="0 0 5 3"><path d="M0 0h5l-2.5 3z" fill="#000"/></svg>
<div style="position:absolute;left:180px;top:440px;width:206px;height:22px;background:#fff;border:1px solid #bcbcc2;box-sizing:border-box"></div>
<div style="position:absolute;left:369px;top:441px;width:16px;height:20px;background:#f0f0f0"></div>
<svg style="left:375px;top:450px" width="5" height="3" viewBox="0 0 5 3"><path d="M0 0h5l-2.5 3z" fill="#000"/></svg>
<div style="position:absolute;left:180px;top:466px;width:206px;height:22px;background:#fff;border:1px solid #bcbcc2;box-sizing:border-box"></div>
<div style="position:absolute;left:369px;top:467px;width:16px;height:20px;background:#f0f0f0"></div>
<svg style="left:375px;top:476px" width="5" height="3" viewBox="0 0 5 3"><path d="M0 0h5l-2.5 3z" fill="#000"/></svg>
<div style="position:absolute;left:180px;top:492px;width:206px;height:22px;background:#fff;border:1px solid #bcbcc2;box-sizing:border-box"></div>
<div style="position:absolute;left:369px;top:493px;width:16px;height:20px;background:#f0f0f0"></div>
<svg style="left:375px;top:502px" width="5" height="3" viewBox="0 0 5 3"><path d="M0 0h5l-2.5 3z" fill="#000"/></svg>
<div style="position:absolute;left:545px;top:414px;width:204px;height:22px;background:#fff;border:1px solid #bcbcc2;box-sizing:border-box"></div>
<div style="position:absolute;left:732px;top:415px;width:16px;height:20px;background:#f0f0f0"></div>
<svg style="left:738px;top:424px" width="5" height="3" viewBox="0 0 5 3"><path d="M0 0h5l-2.5 3z" fill="#000"/></svg>
<div class="t" style="left:548.40px;top:413.82px;font-size:11.19px;color:#000;transform:scaleX(0.9384);transform-origin:0 0;">(None)</div>
<div style="position:absolute;left:545px;top:439px;width:204px;height:22px;background:#fff;border:1px solid #bcbcc2;box-sizing:border-box"></div>
<div style="position:absolute;left:732px;top:440px;width:16px;height:20px;background:#f0f0f0"></div>
<svg style="left:738px;top:449px" width="5" height="3" viewBox="0 0 5 3"><path d="M0 0h5l-2.5 3z" fill="#000"/></svg>
<div class="t" style="left:548.40px;top:438.82px;font-size:11.19px;color:#000;transform:scaleX(0.9384);transform-origin:0 0;">(None)</div>
<div style="position:absolute;left:545px;top:465px;width:204px;height:21px;background:#fff;border:1px solid #bcbcc2;box-sizing:border-box"></div>
<div style="position:absolute;left:732px;top:466px;width:16px;height:19px;background:#f0f0f0"></div>
<svg style="left:738px;top:474px" width="5" height="3" viewBox="0 0 5 3"><path d="M0 0h5l-2.5 3z" fill="#000"/></svg>
<div class="t" style="left:548.40px;top:464.32px;font-size:11.19px;color:#000;transform:scaleX(0.9384);transform-origin:0 0;">(None)</div>
<div style="position:absolute;left:545px;top:491px;width:204px;height:21px;background:#fff;border:1px solid #bcbcc2;box-sizing:border-box"></div>
<div style="position:absolute;left:732px;top:492px;width:16px;height:19px;background:#f0f0f0"></div>
<svg style="left:738px;top:500px" width="5" height="3" viewBox="0 0 5 3"><path d="M0 0h5l-2.5 3z" fill="#000"/></svg>
<div class="t" style="left:548.40px;top:490.32px;font-size:11.19px;color:#000;transform:scaleX(0.9384);transform-origin:0 0;">(None)</div>
<div style="position:absolute;left:545px;top:517px;width:204px;height:21px;background:#fff;border:1px solid #bcbcc2;box-sizing:border-box"></div>
<div style="position:absolute;left:732px;top:518px;width:16px;height:19px;background:#f0f0f0"></div>
<svg style="left:738px;top:526px" width="5" height="3" viewBox="0 0 5 3"><path d="M0 0h5l-2.5 3z" fill="#000"/></svg>
<div class="t" style="left:548.40px;top:516.32px;font-size:11.19px;color:#000;transform:scaleX(0.9384);transform-origin:0 0;">(None)</div>
<svg style="left:183px;top:418px" width="16" height="15" viewBox="0 0 16 15"><path d="M0.5 0.5L15 13.5H0.5z" fill="#b0d4f8" stroke="#8ab8ec" stroke-width="0.8"/>
<path d="M3 6.5L8 11H3z" fill="#fff"/>
<path d="M0.8 0.8L15 13.5" stroke="#3a6ad8" stroke-width="0.9" stroke-dasharray="1 1"/>
<path d="M3 6.5L8 11" stroke="#2a50b0" stroke-width="0.8" stroke-dasharray="1 1"/></svg>
<svg style="left:183px;top:469px" width="16" height="16" viewBox="0 0 16 16"><path d="M5.5 6.5L11 12a1.8 1.8 0 0 1-2.6 2.6L2.2 8.4a3 3 0 0 1 4.3-4.3L13 10.6a1 1 0 0 1 0 0" fill="none" stroke="#4a88e0" stroke-width="1.3"/>
<path d="M3.5 3.5L12 12" stroke="#90c0f0" stroke-width="0.6" fill="none"/></svg>
<div class="t" style="left:202.60px;top:414.02px;font-size:11.19px;color:#000;transform:scaleX(0.9742);transform-origin:0 0;">Inspection</div>
<div class="t" style="left:183.00px;top:439.72px;font-size:11.19px;color:#000;transform:scaleX(0.9384);transform-origin:0 0;">(None)</div>
<div class="t" style="left:202.60px;top:465.82px;font-size:11.19px;color:#000;transform:scaleX(0.8844);transform-origin:0 0;">Medium</div>
<div class="t" style="left:183.00px;top:491.72px;font-size:11.19px;color:#000;transform:scaleX(0.9384);transform-origin:0 0;">(None)</div>
<div style="position:absolute;left:3px;top:86px;width:1px;height:481px;background:#d4d8de"></div>
<div style="position:absolute;left:1px;top:566px;width:774px;height:1px;background:#fff"></div>
<div style="position:absolute;left:0px;top:0px;width:1px;height:568px;background:#000"></div>
<div style="position:absolute;left:775px;top:0px;width:1px;height:568px;background:#000"></div>
<div style="position:absolute;left:0px;top:567px;width:776px;height:1px;background:#000"></div>

</body></html>
